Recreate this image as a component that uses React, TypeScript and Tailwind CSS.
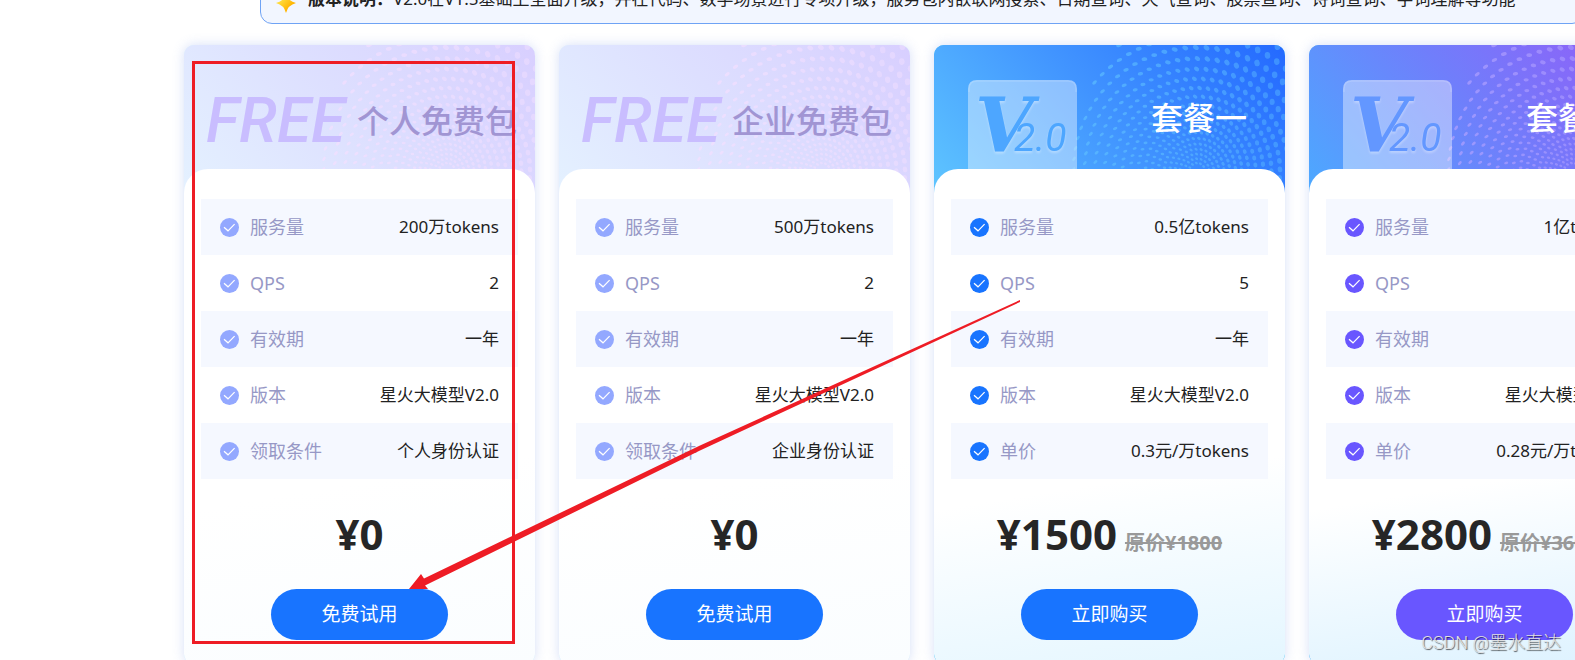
import React from 'react';

type Tone = 'free' | 'blue' | 'violet';

interface Plan {
  id: string;
  title: string;
  tone: Tone;
  rows: [string, string][];
  price: string;
  oldPrice?: string;
  action: string;
}

const PLANS: Plan[] = [
  {
    id: 'personal',
    title: '个人免费包',
    tone: 'free',
    rows: [['服务量', '200万tokens'], ['QPS', '2'], ['有效期', '一年'], ['版本', '星火大模型V2.0'], ['领取条件', '个人身份认证']],
    price: '¥0',
    action: '免费试用',
  },
  {
    id: 'company',
    title: '企业免费包',
    tone: 'free',
    rows: [['服务量', '500万tokens'], ['QPS', '2'], ['有效期', '一年'], ['版本', '星火大模型V2.0'], ['领取条件', '企业身份认证']],
    price: '¥0',
    action: '免费试用',
  },
  {
    id: 'plan-1',
    title: '套餐一',
    tone: 'blue',
    rows: [['服务量', '0.5亿tokens'], ['QPS', '5'], ['有效期', '一年'], ['版本', '星火大模型V2.0'], ['单价', '0.3元/万tokens']],
    price: '¥1500',
    oldPrice: '原价¥1800',
    action: '立即购买',
  },
  {
    id: 'plan-2',
    title: '套餐二',
    tone: 'violet',
    rows: [['服务量', '1亿tokens'], ['QPS', '5'], ['有效期', '一年'], ['版本', '星火大模型V2.0'], ['单价', '0.28元/万tokens']],
    price: '¥2800',
    oldPrice: '原价¥3600',
    action: '立即购买',
  },
];

const TONES = {
  free: {
    card: 'bg-[#dcf3fd]',
    header: 'bg-[linear-gradient(50deg,#e4f1ff_0%,#dddfff_50%,#d8cfff_100%)]',
    body: 'bg-[linear-gradient(171deg,#ffffff_62%,#fafdff_100%)]',
    icon: 'text-[#93a8ff]',
    button: 'bg-[#1874ff]',
    dot: '#f3dfff',
    ink: '#5aaeff',
  },
  blue: {
    card: 'bg-[#55c8f5]',
    header: 'bg-[linear-gradient(50deg,#5ec5ff_0%,#4194ff_50%,#2469ff_100%)]',
    body: 'bg-[linear-gradient(171deg,#ffffff_62%,#e4f6ff_100%)]',
    icon: 'text-[#1874ff]',
    button: 'bg-[#1874ff]',
    dot: '#5cbcff',
    ink: '#4da6ff',
  },
  violet: {
    card: 'bg-[#4fb4f5]',
    header: 'bg-[linear-gradient(50deg,#4ca9ff_0%,#707efb_50%,#965af7_100%)]',
    body: 'bg-[linear-gradient(171deg,#ffffff_62%,#dcf2ff_100%)]',
    icon: 'text-[#6956ff]',
    button: 'bg-[#6956ff]',
    dot: '#b0a0ff',
    ink: '#6397ff',
  },
};

const CheckIcon: React.FC<{ className: string }> = ({ className }) => (
  <svg viewBox="0 0 19 19" className={`h-[19px] w-[19px] shrink-0 ${className}`} aria-hidden="true">
    <circle cx="9.5" cy="9.5" r="9.5" fill="currentColor" />
    <path d="M4 9.2 L8 12.8 L14.6 6.2" fill="none" stroke="#fff" strokeWidth="1.2" />
  </svg>
);

// Dots spread on rings around one centre, wider apart the further out they are
const DotRings: React.FC<{ color: string }> = ({ color }) => {
  const dots: React.ReactNode[] = [];
  for (let r = 8; r < 190; r += 3.8 + r * 0.065) {
    const count = Math.round((2 * Math.PI * r) / (3.8 + r * 0.055));
    for (let i = 0; i < count; i++) {
      const a = (i / count) * 2 * Math.PI + r * 0.01;
      const x = 263 + r * Math.cos(a);
      const y = 126 - r * Math.sin(a);
      if (x < 134 || x > 356 || y < -4 || y > 152) continue;
      if (x + y * 0.55 < 180) continue;
      const right = Math.min(1, Math.max(0, (x - 130) / 200));
      const size = Math.min(3.4, 0.9 + r * 0.013 + right * 0.9);
      dots.push(
        <ellipse
          key={`${r}-${i}`}
          cx={x}
          cy={y}
          rx={size}
          ry={size * (0.52 + right * 0.3)}
          transform={`rotate(${-65 + right * 150} ${x} ${y})`}
          opacity={0.75 - right * 0.3}
        />
      );
    }
  }
  return (
    <svg viewBox="0 0 351 148" className="absolute top-0 right-0 h-[148px] w-[351px]" fill={color} aria-hidden="true">
      {dots}
    </svg>
  );
};

const VersionBadge: React.FC<{ ink: string }> = ({ ink }) => (
  <svg viewBox="0 0 109 89" className="h-[89px] w-[109px]" role="img" aria-label="V2.0">
    <path d="M0 89V9Q0 0 9 0H100Q109 0 109 9V89Z" fill="#fff" fillOpacity="0.4" />
    <path d="M1 12V9Q1 1 9 1H100Q108 1 108 9V12" fill="none" stroke="#fff" strokeOpacity="0.15" strokeWidth="1.5" />
    <g fill={ink} className="drop-shadow-[0_2px_1px_rgba(255,255,255,0.3)]">
      <text x="7" y="71" fontFamily="'DejaVu Serif', serif" fontSize="75" fontWeight="700" fontStyle="italic">V</text>
      <text x="46" y="71" fontFamily="Roboto, sans-serif" fontSize="39" fontStyle="italic">2.0</text>
    </g>
  </svg>
);

const PlanCard: React.FC<{ plan: Plan }> = ({ plan }) => {
  const tone = TONES[plan.tone];
  return (
    <article className={`w-[351px] shrink-0 overflow-hidden rounded-[10px] shadow-[0_0_12px_rgba(120,150,230,0.3)] ${tone.card}`}>
      <header className={`relative h-[148px] ${tone.header}`}>
        <DotRings color={tone.dot} />
        {plan.tone === 'free' ? (
          <div className="relative flex h-[148px] items-center gap-3 pt-1 pl-[22px]">
            <span className="font-[Roboto] text-[62px] leading-none font-medium text-[#c9bdff] italic">FREE</span>
            <h2 className="text-[32px] leading-[48px] font-medium whitespace-nowrap text-[#a195d3]">{plan.title}</h2>
          </div>
        ) : (
          <div className="relative flex justify-between pt-[35px] pr-[38px] pl-[34px]">
            <VersionBadge ink={tone.ink} />
            <h2 className="pt-3.5 text-[32px] leading-[48px] font-medium whitespace-nowrap text-white">{plan.title}</h2>
          </div>
        )}
      </header>
      <div className={`relative -mt-6 flex flex-col items-center rounded-t-3xl rounded-b-[10px] px-[17px] pt-[30px] pb-6 ${tone.body}`}>
        <table className="w-full">
          <tbody>
            {plan.rows.map(([label, value]) => (
              <tr key={label} className="h-14 odd:bg-[#f5f8ff]">
                <th scope="row" className="pl-[19px] text-left font-normal text-[#9798c6]">
                  <span className="flex items-center gap-[11px]">
                    <CheckIcon className={tone.icon} />
                    {label}
                  </span>
                </th>
                <td className="pr-[19px] text-right text-[17px] whitespace-nowrap text-[#222]">{value}</td>
              </tr>
            ))}
          </tbody>
        </table>
        <p className="mt-[27px] flex h-14 items-baseline gap-2 leading-[56px] font-bold whitespace-nowrap">
          <span className="text-[42px] text-[#262626]">{plan.price}</span>
          {plan.oldPrice && <del className="text-[20px] text-[#999]">{plan.oldPrice}</del>}
        </p>
        <button type="button" className={`mt-[27px] h-[51px] w-[177px] rounded-full text-[19px] text-white ${tone.button}`}>
          {plan.action}
        </button>
      </div>
    </article>
  );
};

const App: React.FC = () => {
  return (
    <div className="relative h-screen w-full overflow-hidden bg-white pl-[184px] font-['Noto_Sans','Noto_Sans_CJK_SC',sans-serif] text-[18px]">
      <div className="w-max">
        {/* Version notice */}
        <section className="mx-[76px] -mt-[26px] flex items-center gap-3 rounded-xl border border-[#6fa3f5] bg-[#f2f6ff] px-[15px] py-3 text-[17px] leading-6 text-[#222]">
          <svg viewBox="0 0 20 20" className="h-5 w-5 shrink-0 translate-y-1" aria-hidden="true">
            <defs>
              <linearGradient id="star" x1="0" y1="0" x2="1" y2="1">
                <stop offset="0.3" stopColor="#ffdc3c" />
                <stop offset="0.7" stopColor="#ffb400" />
              </linearGradient>
            </defs>
            <path d="M10 0Q11.5 8 20 10Q12 12 10 20Q8 12 0 10Q8.5 8 10 0Z" fill="url(#star)" />
          </svg>
          <p className="whitespace-nowrap">
            <strong>版本说明：</strong>
            V2.0在V1.5基础上全面升级，并在代码、数学场景进行专项升级，服务包内嵌联网搜索、日期查询、天气查询、股票查询、诗词查询、字词理解等功能
          </p>
        </section>

        {/* Plans */}
        <main className="mt-[21px] flex gap-6">
          {PLANS.map((plan) => (
            <PlanCard key={plan.id} plan={plan} />
          ))}
        </main>
      </div>

      {/* Red marker box and arrow drawn over the page */}
      <div className="pointer-events-none absolute top-[61px] left-[192px] h-[583px] w-[323px] border-3 border-[#ee1c25]" />
      <svg width="1100" height="660" className="pointer-events-none absolute top-0 left-0" aria-hidden="true">
        <path d="M409 589L421 574L424 578.5L700 445.5L1020 300V302L700 450.5L425 585.5L428 589Z" fill="#ee1c25" />
      </svg>

      <span className="absolute right-3.5 bottom-1 font-['Roboto','Noto_Sans_CJK_SC',sans-serif] text-[18px] font-light text-[#e2e2e2] [text-shadow:1px_1px_1px_rgba(0,0,0,0.65)]">
        CSDN @墨水直达
      </span>
    </div>
  );
};

export default App;
